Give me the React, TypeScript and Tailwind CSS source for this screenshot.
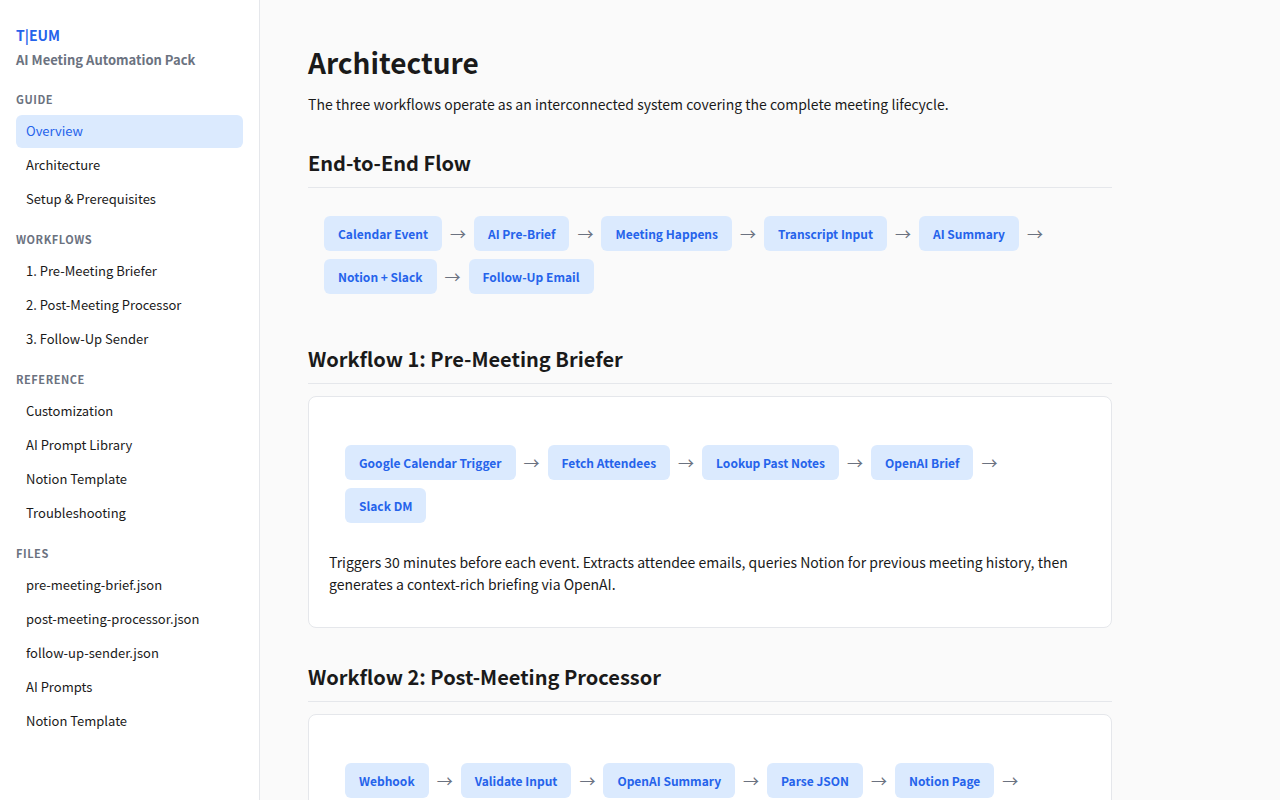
import { Fragment, type ReactNode } from "react";

const navGroups = [
  { title: "Guide", items: ["Overview", "Architecture", "Setup & Prerequisites"] },
  {
    title: "Workflows",
    items: ["1. Pre-Meeting Briefer", "2. Post-Meeting Processor", "3. Follow-Up Sender"],
  },
  {
    title: "Reference",
    items: ["Customization", "AI Prompt Library", "Notion Template", "Troubleshooting"],
  },
  {
    title: "Files",
    items: [
      "pre-meeting-brief.json",
      "post-meeting-processor.json",
      "follow-up-sender.json",
      "AI Prompts",
      "Notion Template",
    ],
  },
];

function Sidebar() {
  return (
    <aside className="sticky top-0 h-screen w-[260px] shrink-0 overflow-y-auto border-r border-[#e5e7eb] bg-white px-4 py-6">
      <div className="mb-1 text-sm leading-[22px] font-bold text-[#2563eb]">T|EUM</div>
      <div className="text-[13px] leading-5 font-semibold text-[#6b7280]">AI Meeting Automation Pack</div>
      <nav className="mt-5">
        {navGroups.map((group) => (
          <section key={group.title} className="mb-3.5">
            <h3 className="mb-1.5 text-[11px] leading-[19px] font-semibold tracking-wider text-[#6b7280] uppercase">
              {group.title}
            </h3>
            <ul className="flex flex-col gap-px">
              {group.items.map((item) => (
                <li key={item}>
                  <a
                    href="#"
                    className={
                      item === "Overview"
                        ? "block rounded-md bg-[#dbeafe] px-2.5 pt-[5px] pb-[7px] text-[13px] leading-[21px] text-[#2563eb]"
                        : "block rounded-md px-2.5 pt-[5px] pb-[7px] text-[13px] leading-[21px] text-[#1a1a1a]"
                    }
                  >
                    {item}
                  </a>
                </li>
              ))}
            </ul>
          </section>
        ))}
      </nav>
    </aside>
  );
}

function Flow({ steps, continues = false }: { steps: string[]; continues?: boolean }) {
  return (
    <div className="my-3 flex flex-wrap items-center gap-2 p-4">
      {steps.map((step, i) => (
        <Fragment key={step}>
          <span className="rounded-md bg-[#dbeafe] px-3.5 py-2 text-xs leading-[19px] font-semibold text-[#2563eb]">
            {step}
          </span>
          {(continues || i < steps.length - 1) && (
            <span className="pb-0.5 text-base leading-6 text-[#6b7280]">→</span>
          )}
        </Fragment>
      ))}
    </div>
  );
}

function Heading({ children }: { children: ReactNode }) {
  return (
    <h2 className="mt-[33px] mb-3 border-b border-[#e5e7eb] pb-2 text-xl leading-8 font-semibold">
      {children}
    </h2>
  );
}

function Card({ children }: { children: ReactNode }) {
  return (
    <div className="rounded-lg border border-[#e5e7eb] bg-white p-5">{children}</div>
  );
}

export default function App() {
  return (
    <div className="flex min-h-screen bg-[#fafafa] font-['Noto_Sans_CJK_KR',sans-serif] text-[#1a1a1a]">
      <Sidebar />
      <main className="max-w-[900px] min-w-0 flex-1 p-12">
        <h1 className="mb-[18px] text-[28px] leading-7 font-bold">Architecture</h1>
        <p className="mb-3 text-sm leading-5">
          The three workflows operate as an interconnected system covering the complete meeting lifecycle.
        </p>

        <Heading>End-to-End Flow</Heading>
        <Flow
          steps={[
            "Calendar Event",
            "AI Pre-Brief",
            "Meeting Happens",
            "Transcript Input",
            "AI Summary",
            "Notion + Slack",
            "Follow-Up Email",
          ]}
        />

        <Heading>Workflow 1: Pre-Meeting Briefer</Heading>
        <Card>
          <Flow
            steps={[
              "Google Calendar Trigger",
              "Fetch Attendees",
              "Lookup Past Notes",
              "OpenAI Brief",
              "Slack DM",
            ]}
          />
          <p className="mb-3 text-sm leading-[22px]">
            Triggers 30 minutes before each event. Extracts attendee emails, queries Notion for previous meeting
            history, then generates a context-rich briefing via OpenAI.
          </p>
        </Card>

        <Heading>Workflow 2: Post-Meeting Processor</Heading>
        <Card>
          <Flow
            steps={["Webhook", "Validate Input", "OpenAI Summary", "Parse JSON", "Notion Page"]}
            continues
          />
        </Card>
      </main>
    </div>
  );
}
